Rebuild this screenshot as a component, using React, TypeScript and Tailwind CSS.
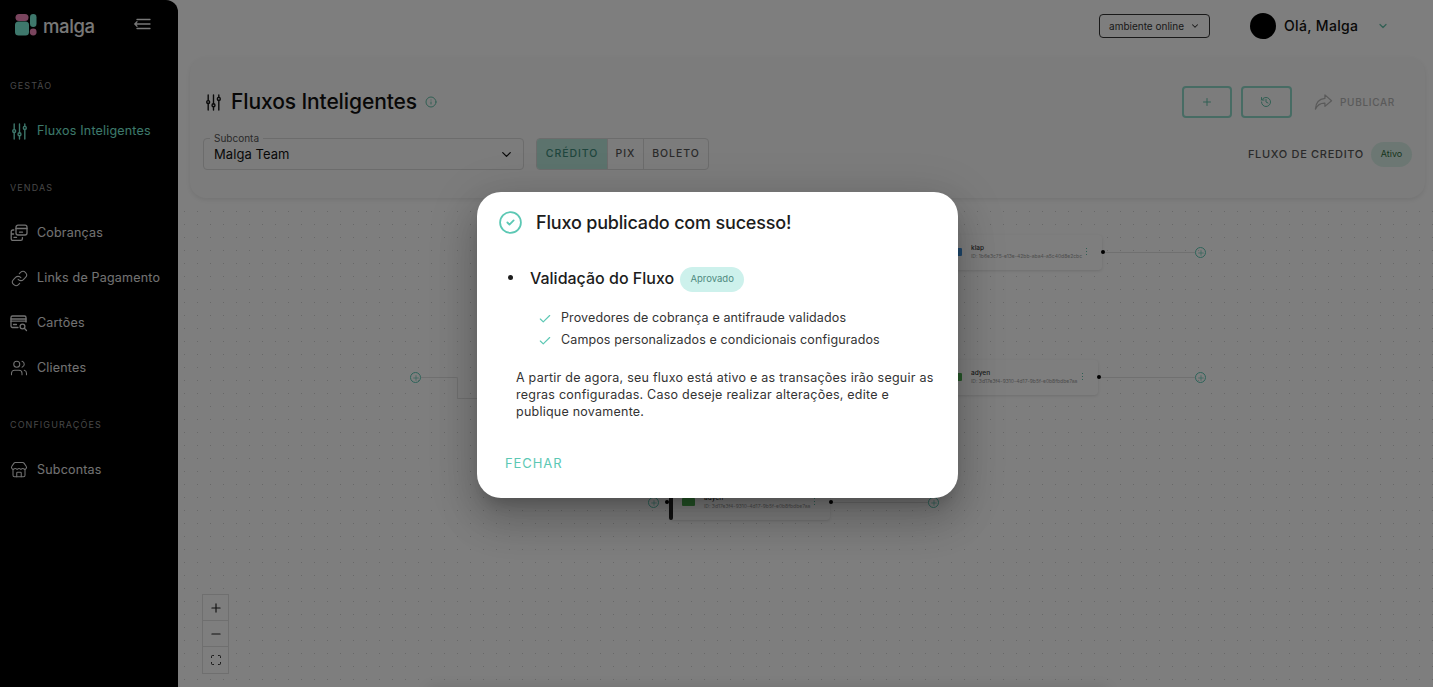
import { Check, ChevronDown, CircleCheck, History, Info, Link, Minus, Plus, Scan, Store, Users } from "lucide-react";
import type { ReactNode } from "react";

function SlidersIcon({ className }: { className?: string }) {
  return (
    <svg viewBox="0 0 16 16" fill="none" stroke="currentColor" strokeWidth="1.3" strokeLinecap="round" className={className}>
      <path d="M3 1v5.2M3 9v6M8 1v8.2M8 12v3M13 1v2.2M13 6v9" />
      <circle cx="3" cy="7.6" r="1.4" />
      <circle cx="8" cy="10.6" r="1.4" />
      <circle cx="13" cy="4.6" r="1.4" />
    </svg>
  );
}

function ChargesIcon() {
  return (
    <svg viewBox="0 0 18 18" fill="none" stroke="currentColor" strokeWidth="1.3" strokeLinecap="round" strokeLinejoin="round" className="h-[18px] w-[18px]">
      <rect x="6" y="1.2" width="11" height="9.8" rx="2" />
      <path d="M6 4.5h11M9.5 8.2h3" />
      <path d="M3.8 6H2.8A1.6 1.6 0 0 0 1.2 7.6v7.2a1.6 1.6 0 0 0 1.6 1.6h8a1.6 1.6 0 0 0 1.6-1.6v-1.2M1.2 10h2.4M4 13.4h2.5" />
    </svg>
  );
}

function CardSearchIcon() {
  return (
    <svg viewBox="0 0 18 18" fill="none" stroke="currentColor" strokeWidth="1.3" strokeLinecap="round" strokeLinejoin="round" className="h-[18px] w-[18px]">
      <path d="M8 13.5H2.5A1.5 1.5 0 0 1 1 12V3.5A1.5 1.5 0 0 1 2.5 2h12A1.5 1.5 0 0 1 16 3.5V8" />
      <path d="M1 5h15M1 7.2h15M3.5 10.5h3" />
      <circle cx="12.5" cy="12.5" r="2.4" />
      <path d="m14.3 14.3 2.2 2.2" />
    </svg>
  );
}

function MenuIcon() {
  return (
    <svg viewBox="0 0 18 14" fill="none" stroke="currentColor" strokeWidth="1.3" strokeLinecap="round" className="h-[14px] w-[18px]">
      <path d="M4 2.5h13M2 7h15M4 11.5h13M4 4.8 1.8 7 4 9.2" />
    </svg>
  );
}

function ShareIcon() {
  return (
    <svg viewBox="0 0 20 18" fill="none" stroke="currentColor" strokeWidth="1.3" strokeLinejoin="round" className="h-[18px] w-[19px]">
      <path d="M11.5 1.5 18.5 7.6l-7 6v-3.5C6.5 10 3.5 12 1.5 16.5c.3-6 3.5-10.5 10-11.2z" />
    </svg>
  );
}

function Logo() {
  return (
    <svg viewBox="0 0 22 22" className="h-[22px] w-[22px]">
      <rect x="0.5" y="0" width="13" height="7" rx="3.5" fill="#f48abc" />
      <rect x="0" y="7.5" width="14" height="14" rx="3.5" fill="#7cf0d8" />
      <rect x="15" y="0" width="6.5" height="13" rx="3.25" fill="#7cf0d8" />
      <circle cx="18.2" cy="18" r="3.4" fill="#f48abc" />
    </svg>
  );
}

function NavGroup({ label, children }: { label: string; children: ReactNode }) {
  return (
    <div className="mb-[27px]">
      <div className="mb-[16px] h-[14px] pl-[10px] text-[9px] leading-[15px] tracking-[0.12em] text-[#8f8f8f]">{label}</div>
      {children}
    </div>
  );
}

function NavItem({ icon, label, active }: { icon: ReactNode; label: string; active?: boolean }) {
  return (
    <div className={`flex h-[45px] items-center gap-[9px] pl-[10px] pt-[1px] text-[12.5px] tracking-[0.015em] ${active ? "text-[#7cf0d8]" : "text-[#e4e4e4]"}`}>
      <span className="flex w-[18px] justify-center">{icon}</span>
      {label}
    </div>
  );
}

function AddHandle({ className }: { className: string }) {
  return (
    <div className={`absolute flex h-[11px] w-[11px] items-center justify-center rounded-full border border-[#5cc8b4] text-[#5cc8b4] ${className}`}>
      <Plus className="h-[8px] w-[8px]" strokeWidth={2} />
    </div>
  );
}

function FlowNode({ name, id, logo, className }: { name: string; id: string; logo: string; className: string }) {
  return (
    <div className={`absolute flex h-[35px] w-[160px] items-center rounded-[4px] bg-[#fdfdfd] pb-[2px] pr-[15px] shadow-[0_1px_3px_rgba(0,0,0,0.12)] ${className}`}>
      <div className={`h-[8px] w-[13px] shrink-0 rounded-[1px] ${logo}`} />
      <div className="ml-[9px] min-w-0 flex-1">
        <div className="text-[6.5px] font-medium leading-[9px] text-[#333]">{name}</div>
        <div className="whitespace-nowrap text-[5px] leading-[7px] text-[#999]">{id}</div>
      </div>
      <div className="flex flex-col gap-[1.5px]">
        <span className="h-[1.5px] w-[1.5px] bg-[#63bfa8]" />
        <span className="h-[1.5px] w-[1.5px] bg-[#63bfa8]" />
        <span className="h-[1.5px] w-[1.5px] bg-[#63bfa8]" />
      </div>
    </div>
  );
}

function FlowCanvas() {
  return (
    <div className="relative flex-1 bg-[radial-gradient(#d0d0d0_0.8px,transparent_1px)] bg-[size:13px_13px]">
      {/* coordenadas do canvas: topo em y=205, esquerda em x=178 */}
      <AddHandle className="left-[232px] top-[167px]" />
      <div className="absolute left-[243px] top-[172px] h-[21px] w-[37px] rounded-tr-[2px] border-r border-t border-[#e0e0e0]" />
      <div className="absolute left-[279px] top-[193px] h-[1px] w-[40px] bg-[#e0e0e0]" />

      <FlowNode name="klap" id="ID: 1b6e3c75-e13e-42bb-aba4-a5c40d8e2cbc" logo="bg-[#3f8fd8]" className="left-[764px] top-[30px] pl-[7px]" />
      <span className="absolute left-[923px] top-[45px] h-[4px] w-[4px] rounded-full bg-black" />
      <div className="absolute left-[927px] top-[47px] h-[1px] w-[90px] bg-[#e0e0e0]" />
      <AddHandle className="left-[1017px] top-[42px]" />

      <FlowNode name="adyen" id="ID: 3d17e3f4-9310-4d17-9b5f-e0b8fbdbe7aa" logo="bg-[#4caf50]" className="left-[760px] top-[155px] pl-[11px]" />
      <span className="absolute left-[919px] top-[170px] h-[4px] w-[4px] rounded-full bg-black" />
      <div className="absolute left-[923px] top-[172px] h-[1px] w-[94px] bg-[#e0e0e0]" />
      <AddHandle className="left-[1017px] top-[167px]" />

      <AddHandle className="left-[470px] top-[292px]" />
      <span className="absolute left-[487px] top-[295px] h-[4px] w-[4px] rounded-full bg-black" />
      <FlowNode name="adyen" id="ID: 3d17e3f4-9310-4d17-9b5f-e0b8fbdbe7aa" logo="bg-[#4caf50]" className="left-[492px] top-[280px] pl-[12px]" />
      <div className="absolute left-[491px] top-[292px] h-[23px] w-[4px] rounded-b-[2px] bg-[#222]" />
      <span className="absolute left-[651px] top-[295px] h-[4px] w-[4px] rounded-full bg-black" />
      <div className="absolute left-[655px] top-[297px] h-[1px] w-[95px] bg-[#e0e0e0]" />
      <AddHandle className="left-[750px] top-[292px]" />

      {/* nó cortado pela borda inferior: só a sombra aparece */}
      <div className="absolute left-[250px] top-[483px] h-[10px] w-[680px] shadow-[0_0_14px_rgba(0,0,0,0.12)]" />

      <div className="absolute left-[24px] top-[389px] flex w-[27px] flex-col border border-[#dedede] bg-[#fcfcfc] text-[#222]">
        <div className="flex h-[26px] items-center justify-center border-b border-[#dedede]"><Plus className="h-[14px] w-[14px]" /></div>
        <div className="flex h-[26px] items-center justify-center border-b border-[#dedede]"><Minus className="h-[14px] w-[14px]" /></div>
        <div className="flex h-[26px] items-center justify-center"><Scan className="h-[12px] w-[12px]" /></div>
      </div>
    </div>
  );
}

function SuccessDialog() {
  return (
    <div className="absolute inset-0 flex items-center justify-center bg-black/50 pl-[2px] pt-[3px]">
      <div className="flex h-[306px] w-[481px] flex-col rounded-[24px] bg-white pl-[21px] pr-[22px] pt-[18px] shadow-[0_11px_15px_-7px_rgba(0,0,0,0.2),0_24px_38px_3px_rgba(0,0,0,0.14),0_9px_46px_8px_rgba(0,0,0,0.12)]">
        <div className="flex h-[24px] items-center gap-[13px]">
          <CircleCheck className="h-[25px] w-[25px] text-[#5cc8b4]" strokeWidth={1.7} />
          <h2 className="text-[18px] font-medium tracking-[-0.01em] text-[#1c1c1c]">Fluxo publicado com sucesso!</h2>
        </div>
        <div className="mt-[29px] flex items-center pl-[10px]">
          <span className="h-[5px] w-[5px] rounded-full bg-[#1c1c1c]" />
          <span className="ml-[17px] text-[16px] font-medium text-[#1c1c1c]">Validação do Fluxo</span>
          <span className="ml-[6px] mt-[4px] flex h-[25px] w-[64px] items-center justify-center rounded-full bg-[#cdf1ec] text-[9.5px] text-[#4f8a80]">Aprovado</span>
        </div>
        <ul className="mt-[18px] flex flex-col gap-[5px] pl-[40px] text-[12.5px] tracking-[0.01em] text-[#333]">
          <li className="flex h-[17px] items-center gap-[9px]"><Check className="h-[14px] w-[14px] text-[#5cc8b4]" />Provedores de cobrança e antifraude validados</li>
          <li className="flex h-[17px] items-center gap-[9px]"><Check className="h-[14px] w-[14px] text-[#5cc8b4]" />Campos personalizados e condicionais configurados</li>
        </ul>
        <p className="mt-[20px] pl-[18px] text-[12.5px] leading-[17px] tracking-[0.019em] text-[#333]">
          A partir de agora, seu fluxo está ativo e as transações irão seguir as regras configuradas. Caso deseje realizar alterações, edite e publique novamente.
        </p>
        <button className="mt-[34px] self-start pl-[7px] text-[13px] font-normal tracking-[0.07em] text-[#5cc8b4]">FECHAR</button>
      </div>
    </div>
  );
}

export default function App() {
  return (
    <div className="h-[700px] overflow-hidden bg-white font-['Inter',sans-serif]">
      <div className="relative flex h-[687px] overflow-hidden bg-[#fcfcfc]">
        <aside className="w-[178px] shrink-0 rounded-tr-[12px] bg-black">
          <div className="flex h-[78px] items-start pl-[15px] pt-[14px]">
            <Logo />
            <span className="ml-[6px] text-[18.5px] font-medium leading-[24px] tracking-[-0.02em] text-[#f0f0f0]">malga</span>
            <span className="ml-[38px] mt-[3px] text-[#f0f0f0]"><MenuIcon /></span>
          </div>
          <NavGroup label="GESTÃO">
            <NavItem active label="Fluxos Inteligentes" icon={<SlidersIcon className="h-[17px] w-[17px]" />} />
          </NavGroup>
          <NavGroup label="VENDAS">
            <NavItem label="Cobranças" icon={<ChargesIcon />} />
            <NavItem label="Links de Pagamento" icon={<Link className="h-[17px] w-[17px]" strokeWidth={1.5} />} />
            <NavItem label="Cartões" icon={<CardSearchIcon />} />
            <NavItem label="Clientes" icon={<Users className="h-[20px] w-[20px]" strokeWidth={1.4} />} />
          </NavGroup>
          <NavGroup label="CONFIGURAÇÕES">
            <NavItem label="Subcontas" icon={<Store className="h-[20px] w-[20px]" strokeWidth={1.4} />} />
          </NavGroup>
        </aside>

        <main className="flex min-w-0 flex-1 flex-col">
          <header className="flex h-[57px] shrink-0 items-start pt-[13px]">
            <div className="ml-[921px] mt-[1px] flex h-[24px] w-[111px] items-center justify-center gap-[6px] rounded-[4px] border border-[#333] text-[10px] text-[#333]">
              ambiente online <ChevronDown className="h-[10px] w-[10px]" strokeWidth={2.5} />
            </div>
            <div className="ml-[40px] h-[26px] w-[26px] rounded-full bg-black" />
            <span className="ml-[8px] text-[14px] font-medium leading-[26px] tracking-[0.025em] text-[#111]">Olá, Malga</span>
            <ChevronDown className="ml-[19px] mt-[7px] h-[12px] w-[12px] text-[#63bfa8]" strokeWidth={2.5} />
          </header>

          <section className="mb-[7px] ml-[12px] mr-[8px] h-[141px] shrink-0 rounded-[16px] bg-[#f8f8f8] pl-[13px] pr-[13px] pt-[29px] shadow-[0_2px_4px_rgba(0,0,0,0.08)]">
            <div className="flex h-[32px] items-center">
              <SlidersIcon className="ml-[2px] h-[17px] w-[17px] text-[#111]" />
              <h1 className="ml-[9px] text-[21px] font-medium tracking-[-0.005em] text-[#111]">Fluxos Inteligentes</h1>
              <Info className="ml-[8px] h-[12px] w-[12px] text-[#63bfa8]" />
              <div className="ml-auto flex h-[32px] w-[50px] items-center justify-center rounded-[4px] border-2 border-[#8fd8c8] text-[#63bfa8]"><Plus className="h-[12px] w-[12px]" /></div>
              <div className="ml-[9px] flex h-[32px] w-[51px] items-center justify-center rounded-[4px] border-2 border-[#8fd8c8] text-[#63bfa8]"><History className="h-[12px] w-[12px]" /></div>
              <div className="ml-[22px] mr-[17px] flex items-center gap-[7px] text-[10px] font-medium tracking-[0.07em] text-[#b5b5b5]"><ShareIcon />PUBLICAR</div>
            </div>
            <div className="mt-[20px] flex h-[32px] items-center">
              <div className="relative flex h-[32px] w-[321px] items-center justify-between rounded-[4px] border border-[#d8d8d8] pl-[10px] pr-[9px] pt-[1px] text-[13px] tracking-[0.005em] text-[#111]">
                <span className="absolute -top-[6px] left-[6px] bg-[#f8f8f8] px-[4px] text-[10px] leading-[11px] tracking-normal text-[#555]">Subconta</span>
                Malga Team
                <ChevronDown className="h-[15px] w-[15px]" strokeWidth={2} />
              </div>
              <div className="ml-[12px] flex h-[32px] overflow-hidden rounded-[4px] border border-[#d8d8d8] text-[10.5px] font-medium tracking-[0.09em] text-[#555]">
                <span className="flex w-[70px] items-center justify-center bg-[#b8e6da] text-[#3f8d7c]">CRÉDITO</span>
                <span className="flex w-[36px] items-center justify-center border-l border-[#d8d8d8]">PIX</span>
                <span className="flex w-[65px] items-center justify-center border-l border-[#d8d8d8]">BOLETO</span>
              </div>
              <span className="ml-auto text-[11px] font-medium tracking-[0.063em] text-[#555]">FLUXO DE CREDITO</span>
              <span className="ml-[7px] flex h-[25px] w-[41px] items-center justify-center rounded-full bg-[#d9efe6] text-[9px] text-[#2e6b3a]">Ativo</span>
            </div>
          </section>

          <FlowCanvas />
        </main>

        <SuccessDialog />
      </div>
    </div>
  );
}
